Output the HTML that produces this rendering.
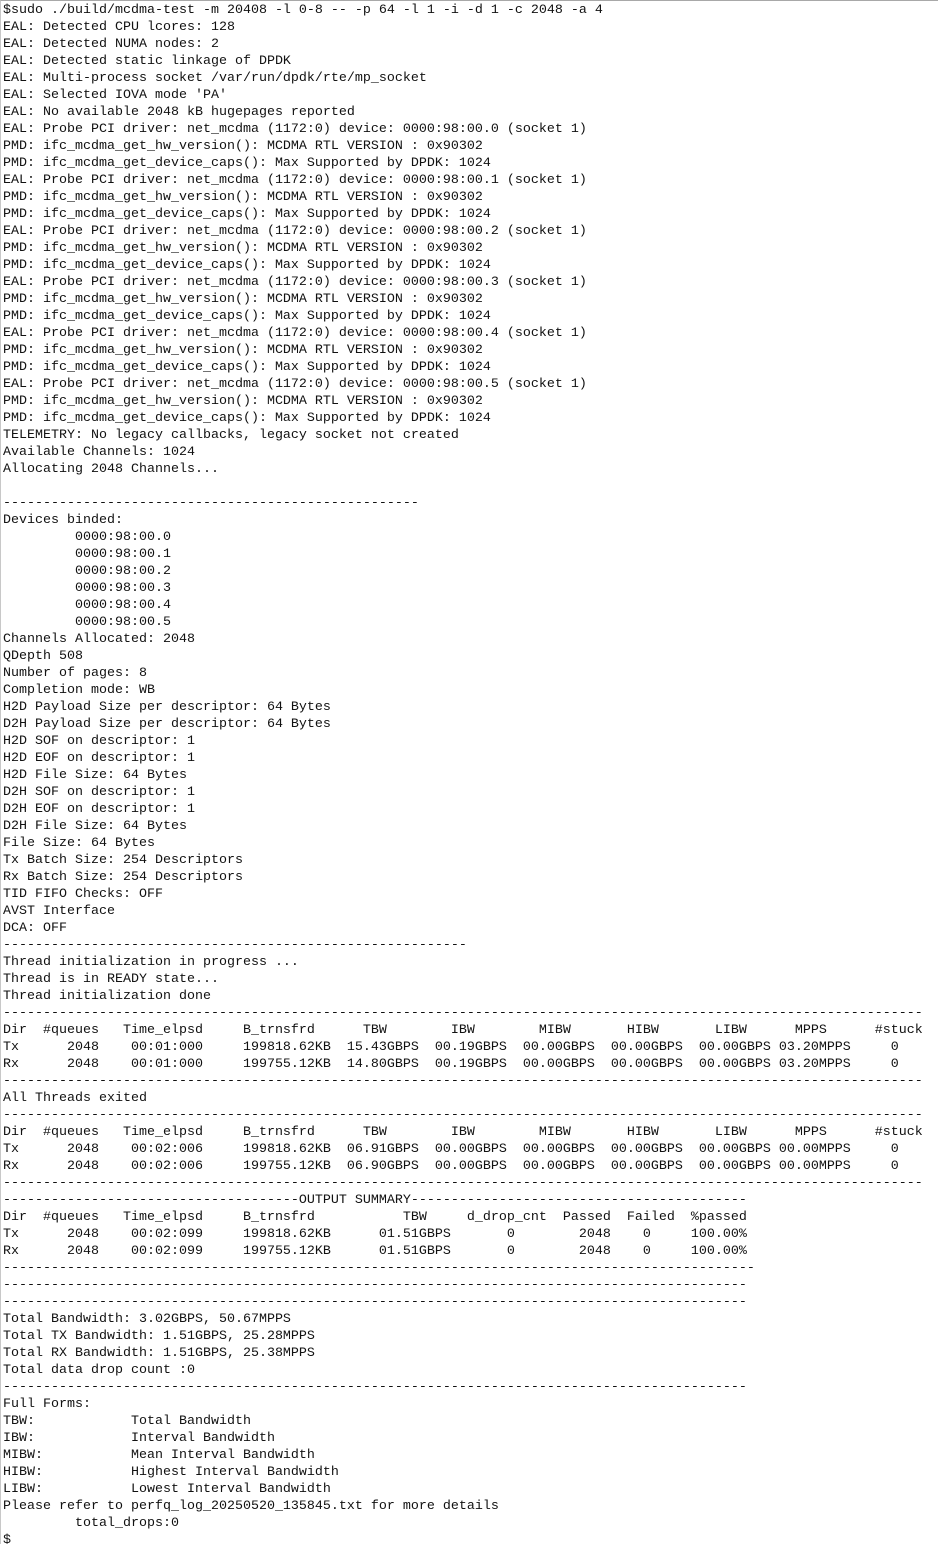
<!DOCTYPE html>
<html><head><meta charset="utf-8">
<style>
html,body{margin:0;padding:0;background:#fff;}
body{width:938px;height:1544px;overflow:hidden;}
pre{margin:0;box-sizing:border-box;width:938px;height:1544px;border-top:1px solid #a8a8a8;border-left:1px solid #c8c8c8;padding:1px 0 0 2px;font-family:"Liberation Mono",monospace;font-size:13.333px;line-height:17px;color:#111;white-space:pre;}
</style></head><body><pre>$sudo ./build/mcdma-test -m 20408 -l 0-8 -- -p 64 -l 1 -i -d 1 -c 2048 -a 4
EAL: Detected CPU lcores: 128
EAL: Detected NUMA nodes: 2
EAL: Detected static linkage of DPDK
EAL: Multi-process socket /var/run/dpdk/rte/mp_socket
EAL: Selected IOVA mode 'PA'
EAL: No available 2048 kB hugepages reported
EAL: Probe PCI driver: net_mcdma (1172:0) device: 0000:98:00.0 (socket 1)
PMD: ifc_mcdma_get_hw_version(): MCDMA RTL VERSION : 0x90302
PMD: ifc_mcdma_get_device_caps(): Max Supported by DPDK: 1024
EAL: Probe PCI driver: net_mcdma (1172:0) device: 0000:98:00.1 (socket 1)
PMD: ifc_mcdma_get_hw_version(): MCDMA RTL VERSION : 0x90302
PMD: ifc_mcdma_get_device_caps(): Max Supported by DPDK: 1024
EAL: Probe PCI driver: net_mcdma (1172:0) device: 0000:98:00.2 (socket 1)
PMD: ifc_mcdma_get_hw_version(): MCDMA RTL VERSION : 0x90302
PMD: ifc_mcdma_get_device_caps(): Max Supported by DPDK: 1024
EAL: Probe PCI driver: net_mcdma (1172:0) device: 0000:98:00.3 (socket 1)
PMD: ifc_mcdma_get_hw_version(): MCDMA RTL VERSION : 0x90302
PMD: ifc_mcdma_get_device_caps(): Max Supported by DPDK: 1024
EAL: Probe PCI driver: net_mcdma (1172:0) device: 0000:98:00.4 (socket 1)
PMD: ifc_mcdma_get_hw_version(): MCDMA RTL VERSION : 0x90302
PMD: ifc_mcdma_get_device_caps(): Max Supported by DPDK: 1024
EAL: Probe PCI driver: net_mcdma (1172:0) device: 0000:98:00.5 (socket 1)
PMD: ifc_mcdma_get_hw_version(): MCDMA RTL VERSION : 0x90302
PMD: ifc_mcdma_get_device_caps(): Max Supported by DPDK: 1024
TELEMETRY: No legacy callbacks, legacy socket not created
Available Channels: 1024
Allocating 2048 Channels...

----------------------------------------------------
Devices binded:
         0000:98:00.0
         0000:98:00.1
         0000:98:00.2
         0000:98:00.3
         0000:98:00.4
         0000:98:00.5
Channels Allocated: 2048
QDepth 508
Number of pages: 8
Completion mode: WB
H2D Payload Size per descriptor: 64 Bytes
D2H Payload Size per descriptor: 64 Bytes
H2D SOF on descriptor: 1
H2D EOF on descriptor: 1
H2D File Size: 64 Bytes
D2H SOF on descriptor: 1
D2H EOF on descriptor: 1
D2H File Size: 64 Bytes
File Size: 64 Bytes
Tx Batch Size: 254 Descriptors
Rx Batch Size: 254 Descriptors
TID FIFO Checks: OFF
AVST Interface
DCA: OFF
----------------------------------------------------------
Thread initialization in progress ...
Thread is in READY state...
Thread initialization done
-------------------------------------------------------------------------------------------------------------------
Dir  #queues   Time_elpsd     B_trnsfrd      TBW        IBW        MIBW       HIBW       LIBW      MPPS      #stuck
Tx      2048    00:01:000     199818.62KB  15.43GBPS  00.19GBPS  00.00GBPS  00.00GBPS  00.00GBPS 03.20MPPS     0
Rx      2048    00:01:000     199755.12KB  14.80GBPS  00.19GBPS  00.00GBPS  00.00GBPS  00.00GBPS 03.20MPPS     0
-------------------------------------------------------------------------------------------------------------------
All Threads exited
-------------------------------------------------------------------------------------------------------------------
Dir  #queues   Time_elpsd     B_trnsfrd      TBW        IBW        MIBW       HIBW       LIBW      MPPS      #stuck
Tx      2048    00:02:006     199818.62KB  06.91GBPS  00.00GBPS  00.00GBPS  00.00GBPS  00.00GBPS 00.00MPPS     0
Rx      2048    00:02:006     199755.12KB  06.90GBPS  00.00GBPS  00.00GBPS  00.00GBPS  00.00GBPS 00.00MPPS     0
-------------------------------------------------------------------------------------------------------------------
-------------------------------------OUTPUT SUMMARY------------------------------------------
Dir  #queues   Time_elpsd     B_trnsfrd           TBW     d_drop_cnt  Passed  Failed  %passed
Tx      2048    00:02:099     199818.62KB      01.51GBPS       0        2048    0     100.00%
Rx      2048    00:02:099     199755.12KB      01.51GBPS       0        2048    0     100.00%
----------------------------------------------------------------------------------------------
---------------------------------------------------------------------------------------------
---------------------------------------------------------------------------------------------
Total Bandwidth: 3.02GBPS, 50.67MPPS
Total TX Bandwidth: 1.51GBPS, 25.28MPPS
Total RX Bandwidth: 1.51GBPS, 25.38MPPS
Total data drop count :0
---------------------------------------------------------------------------------------------
Full Forms:
TBW:            Total Bandwidth
IBW:            Interval Bandwidth
MIBW:           Mean Interval Bandwidth
HIBW:           Highest Interval Bandwidth
LIBW:           Lowest Interval Bandwidth
Please refer to perfq_log_20250520_135845.txt for more details
         total_drops:0
$</pre></body></html>
